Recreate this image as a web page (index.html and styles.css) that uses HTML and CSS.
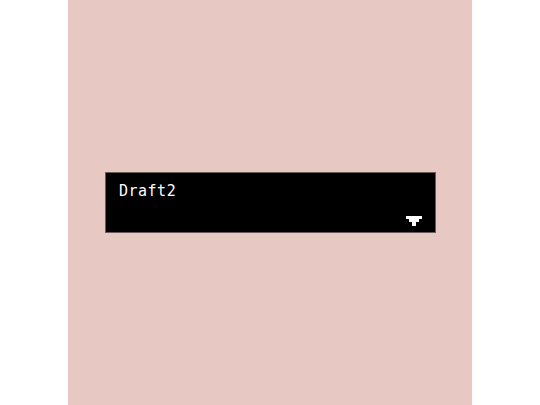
FILE: index.html
```html
<!DOCTYPE html>
<html>
<head>
<meta charset="utf-8">
<link rel="stylesheet" href="styles.css">
</head>
<body>
<div class="panel">
  <div class="field">
    <div class="label">Draft2</div>
    <div class="arrow-row">
      <svg class="arrow" width="16" height="10" viewBox="0 0 16 10" shape-rendering="crispEdges">
        <path d="M0 0H16V3H13V6H10V10H6V6H3V3H0Z" fill="#fff"/>
      </svg>
    </div>
  </div>
</div>
</body>
</html>
```
FILE: styles.css
```css
html, body {
  margin: 0;
  padding: 0;
  background: #fff;
}
.panel {
  width: 404px;
  height: 405px;
  margin-left: 68px;
  background: #e8c8c3;
  display: flex;
  flex-direction: column;
  padding: 172px 0 0 37px;
  box-sizing: border-box;
}
.field {
  width: 331px;
  height: 61px;
  box-sizing: border-box;
  background: #000;
  border: 1px solid #6a5a58;
  display: flex;
  flex-direction: column;
  padding: 9px 13px 6px 13px;
}
.label {
  color: #fff;
  font-family: "DejaVu Sans Mono", monospace;
  font-size: 15px;
  line-height: 18px;
  letter-spacing: 0.5px;
  -webkit-font-smoothing: none;
}
.arrow-row {
  flex: 1;
  display: flex;
  justify-content: flex-end;
  align-items: flex-end;
}
.arrow {
  display: block;
}
```
